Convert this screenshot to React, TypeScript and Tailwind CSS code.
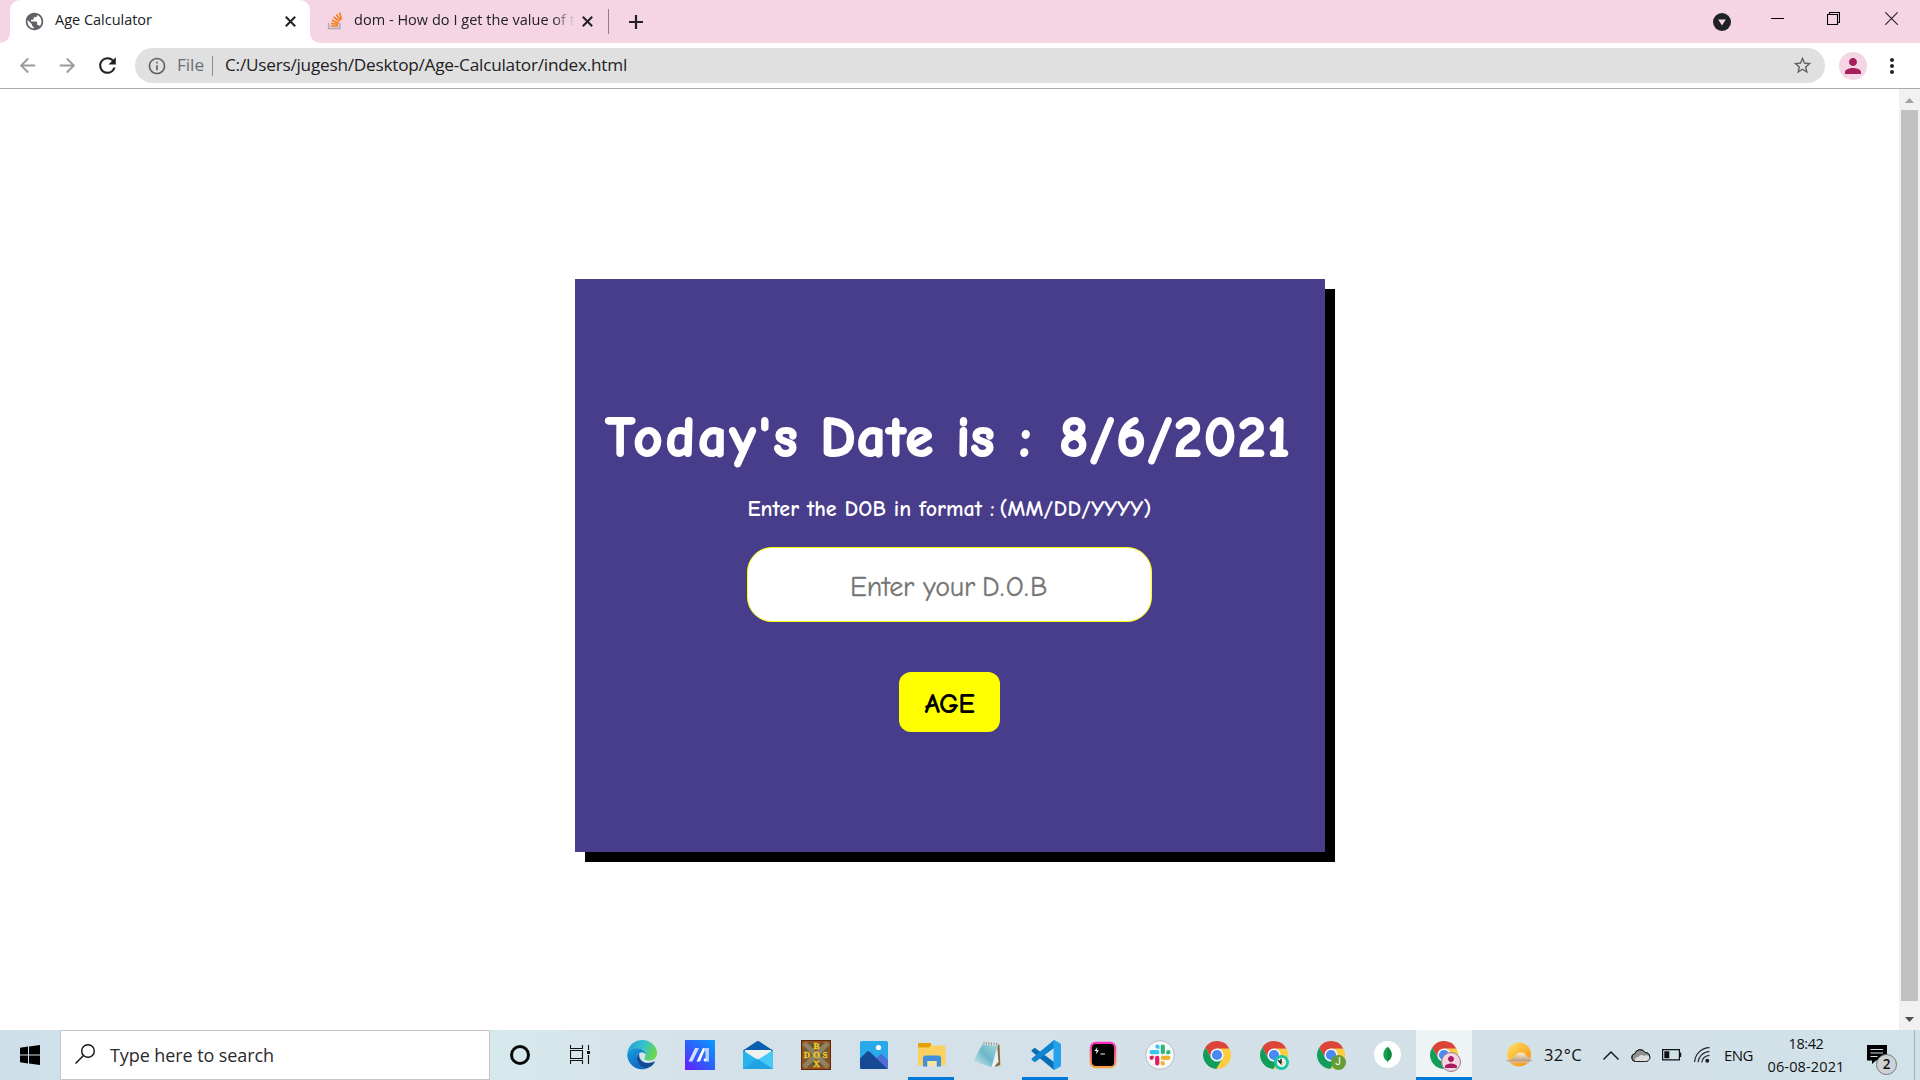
import { useLayoutEffect, useRef, useState, type ReactNode } from "react";
import {
  MdArrowBack,
  MdArrowForward,
  MdInfoOutline,
  MdMoreVert,
  MdPerson,
  MdPublic,
  MdRefresh,
  MdStarBorder,
} from "react-icons/md";

/* Spreads a line of text over a given width by adjusting its tracking. */
function Fit({ text, width, className = "" }: { text: string; width: number; className?: string }) {
  const ref = useRef<HTMLSpanElement>(null);
  const [tracking, setTracking] = useState(0);
  useLayoutEffect(() => {
    if (ref.current) {
      const natural = ref.current.getBoundingClientRect().width;
      setTracking((width - natural) / text.length);
    }
  }, [text, width]);
  return (
    <span ref={ref} className={`inline-block whitespace-pre ${className}`} style={{ letterSpacing: tracking }}>
      {text}
    </span>
  );
}

/* ---------- Browser chrome ---------- */

function StackOverflowIcon() {
  return (
    <svg viewBox="0 0 16 18" className="-mt-[2px] h-[18px] w-4" fill="none">
      <path d="M1.6 11v5.4h11.2V11" stroke="#a9adb3" strokeWidth="1.5" />
      <g stroke="#f48024" strokeWidth="1.7">
        <path d="M3.8 14h7.4M4 11.3l7.3 1.2M4.8 8.2l6.8 2.9M6.6 5l6 4.4M9.2 2.4l4.4 5.9M12.5.6l2 7" />
      </g>
    </svg>
  );
}

function CloseIcon({ className }: { className: string }) {
  return (
    <svg viewBox="0 0 11 11" className={`size-[11px] flex-none ${className}`} stroke="#202124" strokeWidth="2">
      <path d="M.8.8l9.400 9.400M10.200.8L.8 10.200" />
    </svg>
  );
}

function TabStrip() {
  return (
    <div className="flex h-[43px] bg-[#f5d5e3] text-[14.5px] text-[#202124]">
      <div className="flex w-2.5 items-end bg-[#f5d5e3]">
        <div className="h-2.5 w-2.5 bg-white">
          <div className="h-full w-full rounded-br-[10px] bg-[#f5d5e3]" />
        </div>
      </div>
      <div className="flex w-[300px] items-center rounded-t-[10px] bg-white pl-3.5 pr-[14px]">
        <MdPublic className="-mt-px size-[21px] text-[#5f6368]" />
        <Fit text="Age Calculator" width={97} className="-mt-[3px] ml-2.5 flex-none" />
        <CloseIcon className="ml-auto" />
      </div>
      <div className="flex w-2.5 items-end">
        <div className="h-2.5 w-2.5 bg-white">
          <div className="h-full w-full rounded-bl-[10px] bg-[#f5d5e3]" />
        </div>
      </div>
      <div className="flex w-[288px] items-center pl-[7px]">
        <StackOverflowIcon />
        <div className="-mt-[3px] ml-[11px] flex w-[221px] flex-none overflow-hidden [mask-image:linear-gradient(to_right,black_90%,transparent)]">
          <Fit text="dom - How do I get the value of t" width={221} className="flex-none" />
        </div>
        <CloseIcon className="ml-[7px]" />
      </div>
      <div className="mt-[9px] h-[25px] w-px bg-[#8d7f86]" />
      <div className="flex items-center pl-5">
        <svg viewBox="0 0 14 14" className="size-[14px]" stroke="#202124" strokeWidth="2.2">
          <path d="M0 7h14M7 0v14" />
        </svg>
      </div>
      <div className="ml-auto flex h-full items-center">
        <svg viewBox="0 0 18 18" className="mt-px size-[18px]">
          <circle cx="9" cy="9" r="9" fill="#202124" />
          <path d="M5.2 6.4h7.6L9 12.4z" fill="#f5d5e3" />
        </svg>
        <svg viewBox="0 0 13 13" className="mb-[6px] ml-10 size-[13px]">
          <path d="M0 6.5h13" stroke="#000" />
        </svg>
        <svg viewBox="0 0 13 13" className="mb-[6px] ml-[43px] size-[13px]" fill="none" stroke="#000" strokeWidth="1.1">
          <path d="M.5 2.5h10v10H.5zM2.5 2.5v-2h10v10h-2" />
        </svg>
        <svg viewBox="0 0 13 13" className="mb-[6px] ml-[45px] mr-[22px] size-[13px]" stroke="#222" strokeWidth="1.1">
          <path d="M.3.3l12.4 12.4M12.7.3L.3 12.7" />
        </svg>
      </div>
    </div>
  );
}

function Toolbar() {
  return (
    <div className="flex h-[46px] items-center border-b border-[#ababab] bg-white">
      <div className="flex w-[135px] items-center pl-[16px] text-[#9a9b9d]">
        <MdArrowBack className="size-[23px]" />
        <MdArrowForward className="ml-[17px] size-[23px]" />
        <MdRefresh className="ml-[16px] size-[25px] text-[#202124]" />
      </div>
      <div className="flex h-[35px] w-[1690px] items-center rounded-full bg-[#e0e0e0] pl-[12px] pr-[12px] text-[17.2px]">
        <MdInfoOutline className="size-[20px] text-[#5f6368]" />
        <Fit text="File" width={27} className="-mt-px ml-[10px] flex-none text-[#6b6e72]" />
        <div className="ml-[8px] h-5 w-px bg-[#8a8c8f]" />
        <Fit text="C:/Users/jugesh/Desktop/Age-Calculator/index.html" width={402} className="-mt-px ml-[12px] flex-none text-[#202124]" />
        <MdStarBorder className="ml-auto size-[21px] text-[#5f6368]" />
      </div>
      <div className="ml-[14px] flex size-7 items-center justify-center rounded-full bg-[#f5d5e3]">
        <MdPerson className="size-[24px] text-[#a71d5d]" />
      </div>
      <MdMoreVert className="ml-[13px] size-6 text-[#202124]" />
    </div>
  );
}

/* ---------- Page ---------- */

function AgeCard() {
  return (
    <main className="mt-[190px] flex h-[573px] w-[750px] flex-col items-center bg-[#483d8b] pr-px font-['Comic_Sans_MS','Comic_Neue',Lato,sans-serif] text-white shadow-[10px_10px_0_#000]">
      <h1 className="mt-[121px] flex h-[76px] w-[688px] items-center text-[56px] font-bold leading-[76px] [-webkit-text-stroke:2px_white]">
        <Fit text="Today's" width={195} />
        <Fit text="Date" width={114} className="ml-[20px]" />
        <Fit text="is" width={38} className="ml-[22px]" />
        <Fit text=":" width={14} className="ml-[25px]" />
        <Fit text="8/6/2021" width={232} className="ml-[26px]" />
      </h1>
      <p className="mt-[18px] flex h-[30px] text-[22px] font-bold leading-[30px]">
        <Fit text="Enter the DOB in format :" width={247} />
        <Fit text="(MM/DD/YYYY)" width={152} className="ml-[5px]" />
      </p>
      <div className="mt-[23px] flex h-[75px] w-[405px] items-center justify-center rounded-[25px] border border-[#ffff00] bg-white pt-[4px] text-[28px] text-[#757575] [-webkit-text-stroke:0.3px_#757575]">
        <Fit text="Enter your" width={125} />
        <Fit text="D.O.B" width={67} className="ml-[7px]" />
      </div>
      <button className="mt-[50px] flex h-[60px] w-[101px] items-center justify-center rounded-xl bg-[#ffff00] pt-[4px] text-[28px] font-bold text-black">
        <Fit text="AGE" width={50} />
      </button>
    </main>
  );
}

function Scrollbar() {
  return (
    <div className="flex w-[21px] flex-col items-center bg-[#f1f1f1]">
      <svg viewBox="0 0 9 5" className="mt-[9px] h-[5px] w-[9px]">
        <path d="M0 5L4.5 0 9 5z" fill="#a3a3a3" />
      </svg>
      <div className="mt-[7px] h-[891px] w-[17px] bg-[#c1c1c1]" />
      <svg viewBox="0 0 9 5" className="mt-[16px] h-[5px] w-[9px]">
        <path d="M0 0L4.5 5 9 0z" fill="#505050" />
      </svg>
    </div>
  );
}

/* ---------- Taskbar icons ---------- */

function EdgeIcon() {
  return (
    <svg viewBox="0 0 30 30" className="size-[30px]">
      <defs>
        <linearGradient id="edgeTop" x1="0" y1="0.2" x2="1" y2="0.5">
          <stop offset="0" stopColor="#1f9fd8" />
          <stop offset="0.5" stopColor="#35c1cf" />
          <stop offset="1" stopColor="#6ad84b" />
        </linearGradient>
        <linearGradient id="edgeLeft" x1="0" y1="0" x2="0.6" y2="1">
          <stop offset="0" stopColor="#1a9ee0" />
          <stop offset="1" stopColor="#0a66c4" />
        </linearGradient>
      </defs>
      <path d="M.3 14C1 5.500 7.500 0 15 0c9 0 15 6.500 15 13 0 5-3.600 7.600-7.600 7.600-3.400 0-5-1.100-5-2.200 0-.9 1.200-1.300 1.200-3.500 0-3.500-3.300-6.500-8-6.500C5.500 8.400 2 10.800.3 14z" fill="url(#edgeTop)" />
      <path d="M.1 14.800C1.400 10.500 5.600 8.200 10 8.200c4.900 0 8.600 3 8.600 6.600-.6-1.600-2-2.500-3.500-2.500-3 0-5.200 3-5.200 6.500 0 5.400 4.300 9.500 9.400 9.900A15 15 0 0 1 .1 14.800z" fill="url(#edgeLeft)" />
      <path d="M12.400 13.400c-1.600 1.200-2.600 3.200-2.500 5.600.2 5.500 4.600 9.500 9.600 9.500 3.600-.9 6.400-3.200 8.200-6.300.3-.6-.2-.9-.7-.6-5.500 2.900-12.300 1.300-14.200-3.300-.7-1.700-.7-3.500-.4-4.900z" fill="#124b96" />
    </svg>
  );
}

function AsusIcon() {
  return (
    <svg viewBox="0 0 30 30" className="size-[30px]">
      <defs>
        <linearGradient id="asus" x1="0" y1="1" x2="1" y2="0">
          <stop offset="0" stopColor="#6a18ff" />
          <stop offset="0.5" stopColor="#2a62fb" />
          <stop offset="1" stopColor="#0a9bff" />
        </linearGradient>
      </defs>
      <path d="M0 0h30v30H0z" fill="url(#asus)" />
      <path d="M3.500 21.500L10 8h4L7.500 21.500z" fill="#cfdcff" />
      <path d="M11.500 21.500L18 8h2.600L15 21.500z" fill="#fff" />
      <path d="M18.500 8H24v13.500h-3.600v-9z" fill="#b6cdff" />
      <circle cx="20" cy="20" r="1.400" fill="#fff" />
    </svg>
  );
}

function MailIcon() {
  return (
    <svg viewBox="0 0 30 28" className="h-7 w-[30px]">
      <path d="M0 9.500L13.500.5q1.500-.9 3 0L30 9.500V12H0z" fill="#0a5fb0" />
      <path d="M2 9h26v9H2z" fill="#f1f1f1" />
      <path d="M0 9.500L15 19l15-9.500V28H0z" fill="#29b3ea" />
      <path d="M30 9.500V28L15 18.500z" fill="#45c9f5" />
      <path d="M0 28h30L14 17.500z" fill="#1c9be0" opacity=".65" />
    </svg>
  );
}

function DosBoxIcon() {
  return (
    <svg viewBox="0 0 30 30" className="size-[30px]">
      <path d="M0 0h30v30H0z" fill="#5c2a0c" />
      <path d="M1 1h28v28H1z" fill="#9a4e1a" />
      <path d="M3 3h24v24H3z" fill="#6a5a3c" />
      <path d="M3 3l24 24M27 3L3 27" stroke="#93815c" strokeWidth="5" />
      <g fill="#f0cd23" fontFamily="Liberation Serif, serif" fontWeight="700" fontSize="9" textAnchor="middle" stroke="#f0cd23" strokeWidth=".3">
        <text x="15.500" y="9">B</text>
        <text x="6" y="17.500">D</text>
        <text x="15.500" y="17.500">O</text>
        <text x="24" y="17.500">S</text>
        <text x="15.500" y="26.500">X</text>
      </g>
    </svg>
  );
}

function PhotosIcon() {
  return (
    <svg viewBox="0 0 28 28" className="size-7">
      <rect width="28" height="28" rx="1.500" fill="#27a9ea" />
      <path d="M13 20l7-6.500q1-.9 2 0l6 5.500v9H13z" fill="#4f6fd6" />
      <path d="M0 17.500l6.600-6.600q1.700-1.500 3.400 0L27 27.500q-.3.500-1 .5H1.500Q0 28 0 26.500z" fill="#164a94" />
      <circle cx="18.500" cy="6.500" r="2.600" fill="#fff" />
    </svg>
  );
}

function ExplorerIcon() {
  return (
    <svg viewBox="0 0 28 24" className="h-6 w-7">
      <path d="M0 1q0-1 1-1h11l2 2.500h12q1.500 0 1.500 1.500v18.500H0z" fill="#fbd262" />
      <path d="M0 1q0-1 1-1h11q1 0 1 1v1.500l-2 2H0z" fill="#e3a008" />
      <path d="M5 23.500V15q0-2.500 2.500-2.500h13q2.500 0 2.500 2.500v8.500h-4.500V18h-9v5.500z" fill="#3f8fdc" />
      <path d="M9.500 18h9v5H9.500z" fill="#fbe3a0" />
    </svg>
  );
}

function NotepadIcon() {
  return (
    <svg viewBox="0 0 28 27" className="-mt-px mr-[3px] h-[27px] w-7">
      <defs>
        <linearGradient id="note" x1="0" y1="1" x2="1" y2="0">
          <stop offset="0" stopColor="#d6f0f3" />
          <stop offset="0.5" stopColor="#6cb6c8" />
          <stop offset="1" stopColor="#a8dbe2" />
        </linearGradient>
      </defs>
      <path d="M24.500 3l2 1 .8 20-5 2z" fill="#8a6a3a" />
      <path d="M24 3l1.500 18-5 5-2-2z" fill="#eef1f1" />
      <path d="M10 2l15 1.500L18.500 26 .5 20z" fill="url(#note)" />
      <path d="M10 2l15 1.500-.4 1.500L9.300 3.500z" fill="#e9eceb" />
      <path d="M11 1v2.500M13.500 1.200v2.500M16 1.400v2.500M18.500 1.600v2.500M21 1.800v2.500M23.500 2v2.500" stroke="#777" strokeWidth=".8" />
    </svg>
  );
}

function VsCodeIcon() {
  return (
    <svg viewBox="0 0 30 30" className="size-[30px]">
      <path d="M.8 10.100L3 8.200q.7-.5 1.500 0L24 22.800V30q-1.300 0-2.200-.9L.8 11.600q-.8-.8 0-1.500z" fill="#0a6db6" />
      <path d="M.8 19.900L3 21.800q.7.500 1.500 0L24 7.200V0q-1.300 0-2.200.9L.8 18.400q-.8.800 0 1.500z" fill="#0f84cf" />
      <path d="M21.800 29.300c.9.500 1.300.6 2.200.2l4.900-2.400q1.100-.6 1.100-1.800V4.700q0-1.200-1.100-1.800L24 .5c-.9-.4-1.500-.3-2.200.4q.7-.4.700.8v26.600q0 1.200-.7 1z" fill="#27a3ee" />
    </svg>
  );
}

function TerminalIcon() {
  return (
    <svg viewBox="0 0 28 28" className="size-7">
      <defs>
        <linearGradient id="hyper" x1="0" y1="0" x2="0" y2="1">
          <stop offset="0" stopColor="#ff2fb9" />
          <stop offset="1" stopColor="#f7a23c" />
        </linearGradient>
      </defs>
      <rect x="1.800" y="1.800" width="24.400" height="24.400" rx="5" fill="#000" stroke="url(#hyper)" strokeWidth="2.200" />
      <path d="M8.500 6L5.500 10h2.200l-1 3.500L10 9.200H7.800z" fill="#fff" />
      <path d="M11.500 13h4.500" stroke="#ccc" strokeWidth="1.200" />
    </svg>
  );
}

function SlackIcon() {
  return (
    <svg viewBox="0 0 30 30" className="size-[30px]">
      <circle cx="15" cy="15" r="14.300" fill="#f7f8f8" stroke="#a9b0b3" strokeWidth=".8" />
      <g transform="translate(4.500 4.500) scale(.875)">
        <path d="M9 0a2.400 2.400 0 1 0 0 4.800h2.400V2.400A2.400 2.400 0 0 0 9 0zM2.400 6.400H9a2.400 2.400 0 0 1 0 4.800H2.400a2.400 2.400 0 0 1 0-4.800z" fill="#36c5f0" />
        <path d="M24 8.800a2.400 2.400 0 1 0-4.800 0v2.400h2.400A2.400 2.400 0 0 0 24 8.800zM17.600 8.800V2.400a2.400 2.400 0 1 0-4.800 0v6.400a2.400 2.400 0 0 0 4.800 0z" fill="#2eb67d" />
        <path d="M15.200 24a2.400 2.400 0 1 0 0-4.800h-2.400v2.400a2.400 2.400 0 0 0 2.400 2.400zM15.200 17.600h6.400a2.400 2.400 0 1 0 0-4.800h-6.400a2.400 2.400 0 0 0 0 4.800z" fill="#ecb22e" />
        <path d="M0 15.200a2.400 2.400 0 1 0 4.800 0v-2.400H2.400A2.400 2.400 0 0 0 0 15.200zM6.400 15.200v6.400a2.400 2.400 0 1 0 4.800 0v-6.400a2.400 2.400 0 0 0-4.800 0z" fill="#e01e5a" />
      </g>
    </svg>
  );
}

function ChromeIcon({ badge }: { badge?: ReactNode }) {
  return (
    <div className="relative -mt-px">
      <svg viewBox="2 2 44 44" className="size-7">
        <path d="M5.540 12.030A22 22 0 0 1 43.600 14H24L15.340 29z" fill="#dc4437" />
        <path d="M43.600 14A22 22 0 0 1 22.860 45.970L32.660 29 24 14z" fill="#fdcc3f" />
        <path d="M22.860 45.970A22 22 0 0 1 5.540 12.030L15.340 29l17.320 0z" fill="#129d5a" />
        <circle cx="24" cy="24" r="10.400" fill="#f4f6f8" />
        <circle cx="24" cy="24" r="8" fill="#4a89f4" />
      </svg>
      {badge}
    </div>
  );
}

function MongoIcon() {
  return (
    <svg viewBox="0 0 26 26" className="-mt-px size-[27px]">
      <circle cx="13" cy="13" r="13" fill="#fff" />
      <path d="M13 5.500c3 2.800 4 5 4 7.500 0 3-1.600 5-3.600 6.300L13 21l-.4-1.700C10.600 18 9 16 9 13c0-2.500 1-4.700 4-7.500z" fill="#12a150" />
      <path d="M13 5.500c3 2.800 4 5 4 7.500 0 3-1.600 5-3.600 6.300L13 21z" fill="#0c8a42" />
    </svg>
  );
}

function TaskButton({ children, className = "w-[57px]", running, active }: { children: ReactNode; className?: string; running?: boolean; active?: boolean }) {
  return (
    <div className={`relative flex h-full flex-none items-center justify-center ${className} ${active ? "bg-[#eef3f5]" : ""}`}>
      {children}
      {running && <div className="absolute bottom-0 left-[5px] right-[6px] h-[3px] bg-[#0078d7]" />}
      {active && <div className="absolute inset-x-0 bottom-0 h-[3px] bg-[#0078d7]" />}
    </div>
  );
}

function Tray() {
  return (
    <div className="flex h-full items-center text-[#111]">
      <svg viewBox="0 0 28 26" className="ml-[33px] h-[26px] w-7">
        <defs>
          <linearGradient id="sun" x1="0" y1="0" x2="1" y2="1">
            <stop offset="0" stopColor="#ffe36b" />
            <stop offset="1" stopColor="#f58b06" />
          </linearGradient>
          <linearGradient id="haze" x1="0" y1="0" x2="0" y2="1">
            <stop offset="0" stopColor="#fff0c8" />
            <stop offset="1" stopColor="#b59a85" />
          </linearGradient>
        </defs>
        <circle cx="14" cy="12.500" r="12" fill="url(#sun)" />
        <path d="M1 18.500q3-.2 5-.6 1-3 4-2.800 1.200-4.500 6-4.500 4 0 5.500 4 3 0 3.500 3l2 .5q.5 1-1 1.200H1z" fill="url(#haze)" />
        <path d="M4 19.500h20v1.500H5z" fill="#d9b48e" />
      </svg>
      <Fit text="32°C" width={38} className="ml-[11px] text-[16.500px]" />
      <svg viewBox="0 0 16 9" className="ml-[21px] h-[9px] w-4" fill="none" stroke="#111" strokeWidth="1.400">
        <path d="M.5 8.500L8 1l7.500 7.500" />
      </svg>
      <svg viewBox="0 0 20 14" className="-mt-px ml-3 h-[14px] w-5">
        <path d="M4.500 13.500a4 4 0 0 1-.6-7.900A5.500 5.500 0 0 1 14 4.500a4.600 4.600 0 0 1 1.500 9z" fill="#8f9192" stroke="#222" />
        <path d="M4 13.300q-1-4 3.500-4.500 2-3 5.500-1 4.500-2 6.300 2.500-.3 3-3.800 3.200z" fill="#dcdddd" />
        <path d="M4.500 13.500a4 4 0 0 1-.6-7.900A5.500 5.500 0 0 1 14 4.500a4.600 4.600 0 0 1 1.500 9z" fill="none" stroke="#222" />
      </svg>
      <svg viewBox="0 0 20 12" className="ml-[11px] h-3 w-5">
        <path d="M.6.600h16.800v10.300H.6z" fill="none" stroke="#111" strokeWidth="1.200" />
        <path d="M2.300 2.300h5v7h-5zM18 3.500h1.200v4.500H18z" fill="#111" />
      </svg>
      <svg viewBox="0 0 16 16" className="ml-3 size-4" fill="none" stroke="#222" strokeWidth="1.200">
        <path d="M.6 15C1 7.500 7 .8 15.500.6M4 15.300C4.500 9.500 9 4.800 15.500 4.500M7.700 15.500c.3-4 3.500-7 7.800-7.200" />
        <circle cx="13.300" cy="13.800" r="1.400" fill="#111" />
      </svg>
      <Fit text="ENG" width={29} className="ml-[14px] text-[15px]" />
      <div className="ml-[14px] flex w-[78px] flex-col items-center text-[14.500px] leading-[23px]">
        <Fit text="18:42" width={35} />
        <Fit text="06-08-2021" width={77} />
      </div>
      <div className="relative ml-[22px]">
        <svg viewBox="0 0 20 20" className="size-5">
          <path d="M0 0h20v15.500H9L5 19v-3.500H0z" fill="#000" />
          <path d="M3.500 4.500h12.500M3.500 8h12.500M3.500 11.500h7" stroke="#d5e0e6" />
        </svg>
        <div className="absolute left-[9px] top-[9px] flex size-[21px] items-center justify-center rounded-full border border-[#777] bg-[#cdd2d5] text-[13.500px] font-semibold">
          2
        </div>
      </div>
    </div>
  );
}

function Taskbar() {
  return (
    <footer className="flex h-[50px] items-center bg-[linear-gradient(90deg,#cfdfea_0,#d6e9ec_500px,#d5e1e9_700px,#d3e0e8_1400px,#d1e2e9_100%)]">
      <div className="flex w-[60px] justify-center">
        <svg viewBox="0 0 20 20" className="size-5">
          <path d="M0 2.700L8 1.500v8H0zM9 1.400L20 0v9.500H9zM0 10.500h8v8l-8-1.200zM9 10.500h11V20L9 18.600z" />
        </svg>
      </div>
      <div className="flex h-full w-[430px] items-center border border-[#c6c6c6] bg-white pl-[14px]">
        <svg viewBox="0 0 20 20" className="-mt-[2px] size-5" fill="none" stroke="#111" strokeWidth="1.400">
          <circle cx="13" cy="7" r="6.300" />
          <path d="M8.500 11.500L.5 19.500" />
        </svg>
        <Fit text="Type here to search" width={164} className="ml-[15px] text-[18px] text-[#2b2b2b]" />
      </div>
      <TaskButton className="w-[60px]">
        <div className="size-5 rounded-full border-[3px] border-[#0a0a0a]" />
      </TaskButton>
      <TaskButton className="w-[63px] pr-[3px]">
        <svg viewBox="0 0 20 19" className="-mt-px h-[19px] w-5" fill="none" stroke="#111" strokeWidth="1.100">
          <path d="M.5 0v3.500h12V0M.5 19v-3.500h12V19M.5 5.500h12v8H.5zM18.500 0v5M18.500 10v9" />
          <path d="M17 6h3v3h-3z" fill="#111" stroke="none" />
        </svg>
      </TaskButton>
      <TaskButton className="w-[58px]"><EdgeIcon /></TaskButton>
      <TaskButton className="w-[58px]"><AsusIcon /></TaskButton>
      <TaskButton className="w-[58px]"><MailIcon /></TaskButton>
      <TaskButton className="w-[58px]"><DosBoxIcon /></TaskButton>
      <TaskButton className="w-[58px]"><PhotosIcon /></TaskButton>
      <TaskButton className="w-[57px]" running><ExplorerIcon /></TaskButton>
      <TaskButton><NotepadIcon /></TaskButton>
      <TaskButton running><VsCodeIcon /></TaskButton>
      <TaskButton><TerminalIcon /></TaskButton>
      <TaskButton><SlackIcon /></TaskButton>
      <TaskButton><ChromeIcon /></TaskButton>
      <TaskButton>
        <ChromeIcon
          badge={
            <svg viewBox="0 0 16 16" className="absolute left-[14px] top-[14px] size-[15px]">
              <circle cx="8" cy="8" r="8" fill="#12c9a4" />
              <circle cx="8" cy="8" r="5" fill="#f1f4ee" />
              <path d="M4.500 5.500l3 3.500V4" fill="none" stroke="#222" strokeWidth="1.600" />
              <path d="M8 10l3.500-3" stroke="#e5d9a0" strokeWidth="1.500" />
            </svg>
          }
        />
      </TaskButton>
      <TaskButton>
        <ChromeIcon
          badge={
            <div className="absolute left-[14px] top-[14px] flex size-[15px] items-center justify-center rounded-full bg-[#649c36] font-['Roboto',sans-serif] text-[10px] leading-none text-white">
              J
            </div>
          }
        />
      </TaskButton>
      <TaskButton><MongoIcon /></TaskButton>
      <TaskButton className="w-[56px]" active>
        <ChromeIcon
          badge={
            <div className="absolute left-[11px] top-[11px] flex size-5 items-center justify-center overflow-hidden rounded-full border border-[#8f8088] bg-[#f5d5e3]">
              <MdPerson className="size-[18px] flex-none text-[#a71d5d]" />
            </div>
          }
        />
      </TaskButton>
      <Tray />
      <div className="ml-auto mr-[5px] h-full w-px bg-[#a3b0b7]" />
    </footer>
  );
}

export default function App() {
  return (
    <div className="flex h-[1080px] w-[1920px] flex-col overflow-hidden bg-white font-['Segoe_UI','Open_Sans',sans-serif]">
      <header>
        <TabStrip />
        <Toolbar />
      </header>
      <div className="flex flex-1">
        <div className="flex flex-1 justify-center pl-[1px]">
          <AgeCard />
        </div>
        <Scrollbar />
      </div>
      <Taskbar />
    </div>
  );
}
